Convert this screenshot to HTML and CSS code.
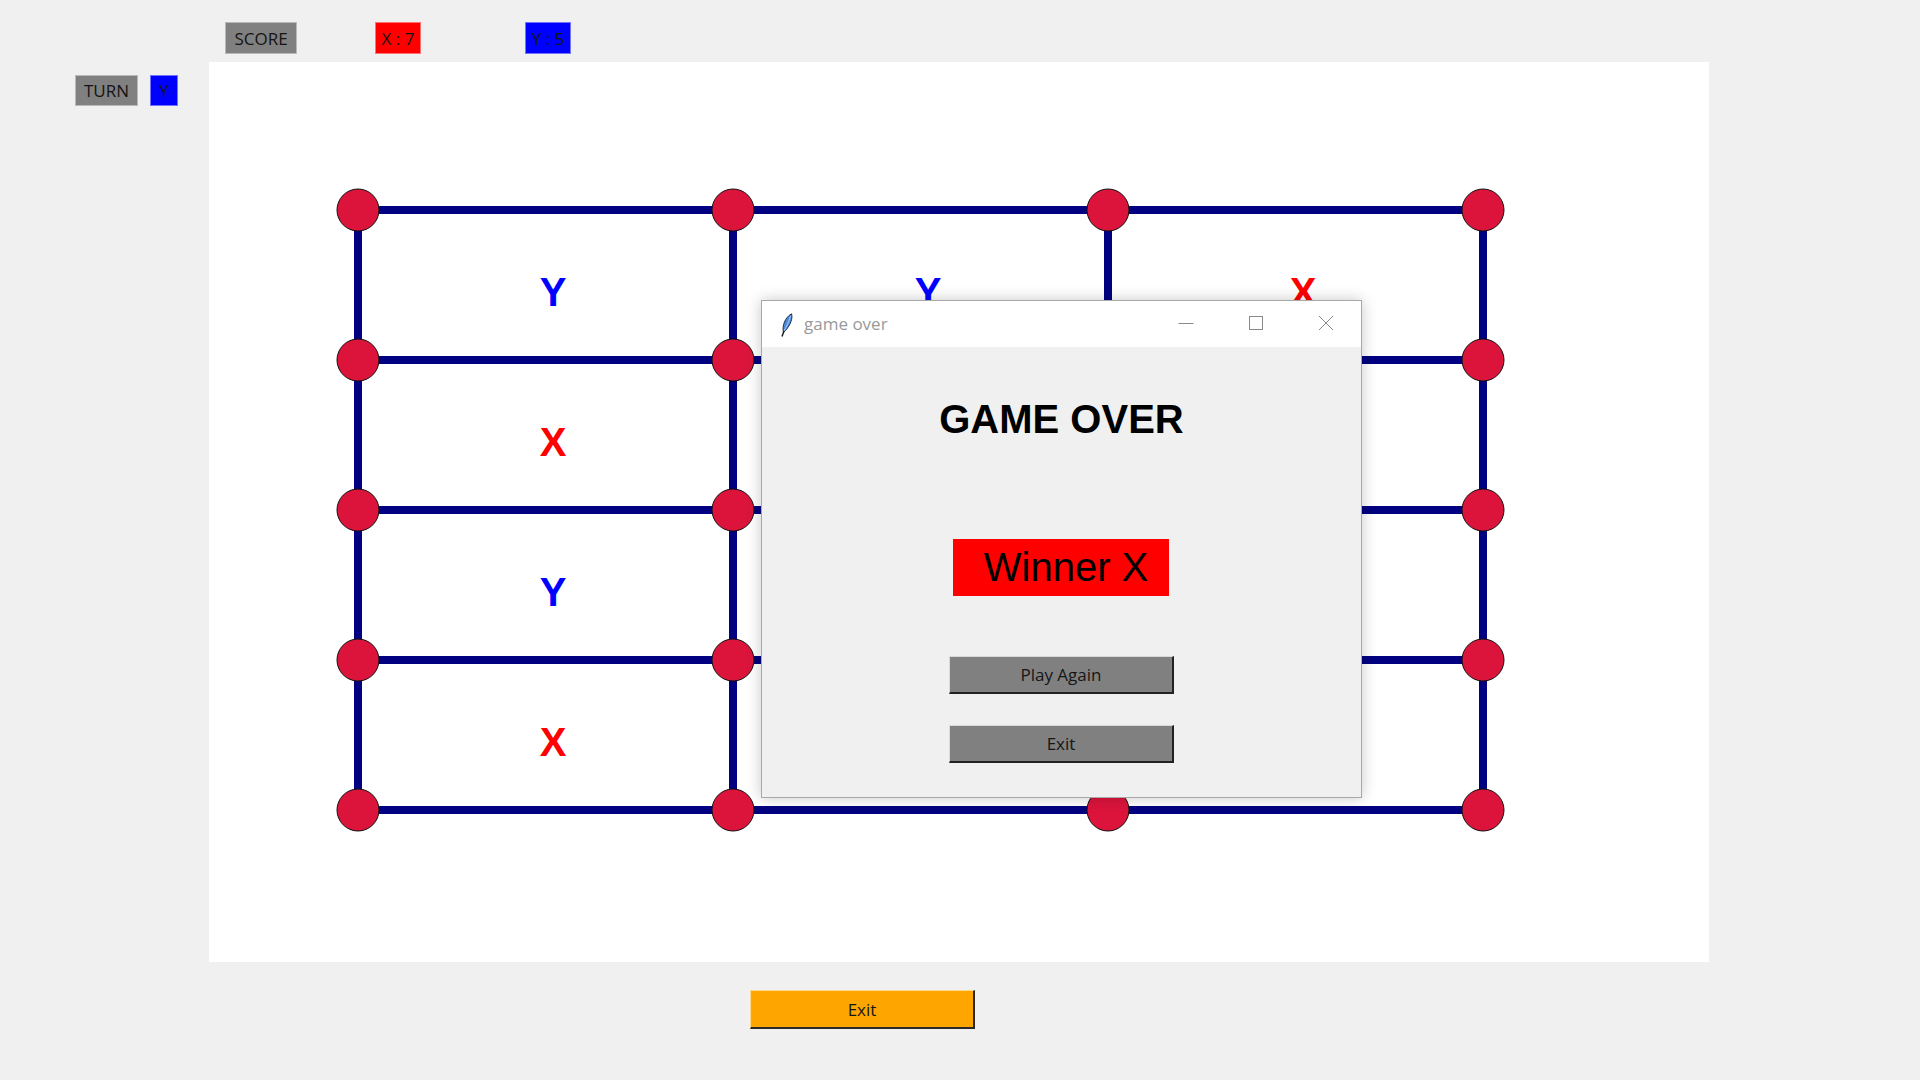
FILE: index.html
```html
<!DOCTYPE html>
<html>
<head>
<meta charset="utf-8">
<title>Dots and Boxes</title>
<link rel="stylesheet" href="styles.css">
</head>
<body>
<div class="app">
  <div class="header">
    <div class="tag tag-gray score-tag">SCORE</div>
    <div class="tag tag-red x-tag">X : 7</div>
    <div class="tag tag-blue y-tag">Y : 5</div>
  </div>
  <div class="main">
    <div class="turn">
      <div class="tag tag-gray turn-tag">TURN</div>
      <div class="tag tag-blue turn-val">Y</div>
    </div>
    <div class="board">
      <svg class="board-svg" width="1500" height="900" viewBox="0 0 1500 900" xmlns="http://www.w3.org/2000/svg">
        <g stroke="#000080" stroke-width="8" stroke-linecap="butt">
          <line x1="149" y1="148" x2="1274" y2="148"/>
          <line x1="149" y1="298" x2="1274" y2="298"/>
          <line x1="149" y1="448" x2="1274" y2="448"/>
          <line x1="149" y1="598" x2="1274" y2="598"/>
          <line x1="149" y1="748" x2="1274" y2="748"/>
          <line x1="149" y1="148" x2="149" y2="748"/>
          <line x1="524" y1="148" x2="524" y2="748"/>
          <line x1="899" y1="148" x2="899" y2="748"/>
          <line x1="1274" y1="148" x2="1274" y2="748"/>
        </g>
        <g class="marks" font-family="'Liberation Sans', Arial, sans-serif" font-weight="700" font-size="40" text-anchor="middle">
          <text x="344" y="244" fill="#0000ff">Y</text>
          <text x="344" y="394" fill="#ff0000">X</text>
          <text x="344" y="544" fill="#0000ff">Y</text>
          <text x="344" y="694" fill="#ff0000">X</text>
          <text x="719" y="244" fill="#0000ff">Y</text>
          <text x="719" y="394" fill="#ff0000">X</text>
          <text x="719" y="544" fill="#ff0000">X</text>
          <text x="719" y="694" fill="#0000ff">Y</text>
          <text x="1094" y="244" fill="#ff0000">X</text>
          <text x="1094" y="394" fill="#ff0000">X</text>
          <text x="1094" y="544" fill="#ff0000">X</text>
          <text x="1094" y="694" fill="#ff0000">X</text>
        </g>
        <g fill="#dc143c" stroke="#111" stroke-width="1">
          <circle cx="149" cy="148" r="21"/><circle cx="524" cy="148" r="21"/><circle cx="899" cy="148" r="21"/><circle cx="1274" cy="148" r="21"/>
          <circle cx="149" cy="298" r="21"/><circle cx="524" cy="298" r="21"/><circle cx="899" cy="298" r="21"/><circle cx="1274" cy="298" r="21"/>
          <circle cx="149" cy="448" r="21"/><circle cx="524" cy="448" r="21"/><circle cx="899" cy="448" r="21"/><circle cx="1274" cy="448" r="21"/>
          <circle cx="149" cy="598" r="21"/><circle cx="524" cy="598" r="21"/><circle cx="899" cy="598" r="21"/><circle cx="1274" cy="598" r="21"/>
          <circle cx="149" cy="748" r="21"/><circle cx="524" cy="748" r="21"/><circle cx="899" cy="748" r="21"/><circle cx="1274" cy="748" r="21"/>
        </g>
      </svg>
    </div>
  </div>
  <div class="footer">
    <button class="btn btn-orange">Exit</button>
  </div>
</div>

<div class="dialog">
  <div class="titlebar">
    <svg class="feather" width="14" height="24" viewBox="0 0 14 24" xmlns="http://www.w3.org/2000/svg">
      <path d="M12.5 0.8 C14 5 11.5 12 6.5 17.5 L4.5 19.5 C2.8 13 6 4.5 12.5 0.8 Z" fill="#4a8ad8" stroke="#1d2f4d" stroke-width="1"/>
      <path d="M11.5 3 C10 8.5 8 13 5 18" fill="none" stroke="#b5d4f5" stroke-width="0.9"/>
      <path d="M5 18 L3 23.5" stroke="#1b1b1b" stroke-width="1.5" fill="none"/>
    </svg>
    <span class="title-text">game over</span>
    <div class="caption">
      <div class="cap-btn">
        <svg width="16" height="16" viewBox="0 0 16 16"><line x1="0.5" y1="8.5" x2="15.5" y2="8.5" stroke="#8a8a8a" stroke-width="1"/></svg>
      </div>
      <div class="cap-btn">
        <svg width="16" height="16" viewBox="0 0 16 16"><rect x="1.5" y="1.5" width="13" height="13" fill="none" stroke="#8a8a8a" stroke-width="1"/></svg>
      </div>
      <div class="cap-btn">
        <svg width="16" height="16" viewBox="0 0 16 16"><path d="M1 1 L15 15 M15 1 L1 15" stroke="#8a8a8a" stroke-width="1" fill="none"/></svg>
      </div>
    </div>
  </div>
  <div class="dialog-body">
    <div class="go-title">GAME OVER</div>
    <div class="winner">Winner X</div>
    <button class="btn btn-gray play-btn">Play Again</button>
    <button class="btn btn-gray exit-btn">Exit</button>
  </div>
</div>
</body>
</html>
```

FILE: styles.css
```css
* { box-sizing: border-box; }

html, body {
  margin: 0;
  padding: 0;
  width: 1920px;
  height: 1080px;
  overflow: hidden;
  background: #f0f0f0;
  font-family: "Open Sans", "Noto Sans", sans-serif;
}

.app {
  display: flex;
  flex-direction: column;
}

.header {
  display: flex;
  align-items: flex-start;
  height: 62px;
  padding: 22px 0 0 225px;
}

.tag {
  height: 32px;
  display: flex;
  align-items: center;
  justify-content: center;
  font-size: 17px;
  color: #141414;
  border: 1px solid rgba(255, 255, 255, 0.45);
  white-space: nowrap;
}

.tag-gray { background: #808080; }
.tag-red { background: #ff0000; }
.tag-blue { background: #0000ff; }

.score-tag { width: 72px; }
.x-tag { width: 46px; margin-left: 78px; }
.y-tag { width: 46px; margin-left: 104px; }

.main {
  display: flex;
}

.turn {
  width: 209px;
  display: flex;
  align-items: flex-start;
  gap: 12px;
  padding: 13px 0 0 75px;
}

.turn .tag { height: 31px; }
.turn-tag { width: 63px; }
.turn-val { width: 28px; }

.board {
  width: 1500px;
  height: 900px;
  background: #ffffff;
}

.board-svg { display: block; }

.footer {
  padding: 28px 0 0 750px;
}

.btn {
  display: block;
  width: 225px;
  font-family: "Open Sans", "Noto Sans", sans-serif;
  font-size: 17px;
  color: #161616;
  padding: 0;
  margin: 0;
  border-style: solid;
  border-width: 1px 2px 2px 1px;
}

.btn-orange {
  height: 39px;
  background: #ffa500;
  border-color: #ffd98f #2a2a2a #2a2a2a #ffd98f;
}

.btn-gray {
  height: 38px;
  background: #808080;
  border-color: #d9d9d9 #222222 #222222 #d9d9d9;
}

.dialog {
  position: absolute;
  left: 761px;
  top: 300px;
  width: 601px;
  height: 498px;
  border: 1px solid #a8a8a8;
  background: #f0f0f0;
  box-shadow: 0 0 14px rgba(0, 0, 0, 0.22);
  display: flex;
  flex-direction: column;
}

.titlebar {
  height: 46px;
  background: #ffffff;
  display: flex;
  align-items: center;
  padding-left: 17px;
}

.feather { display: block; margin-top: 1px; }

.title-text {
  margin-left: 11px;
  font-size: 17px;
  color: #999999;
  padding-bottom: 2px;
}

.caption {
  margin-left: auto;
  display: flex;
  height: 100%;
}

.cap-btn {
  width: 70px;
  height: 100%;
  display: flex;
  align-items: center;
  justify-content: center;
}

.cap-btn svg { display: block; margin-bottom: 2px; }

.dialog-body {
  flex: 1;
  display: flex;
  flex-direction: column;
  align-items: center;
  padding-top: 49px;
}

.go-title {
  font-family: "Liberation Sans", Arial, sans-serif;
  font-weight: 700;
  font-size: 40px;
  line-height: 46px;
  color: #000;
}

.winner {
  margin-top: 97px;
  height: 57px;
  line-height: 57px;
  padding: 0 21px 0 31px;
  background: #ff0000;
  font-family: "Liberation Sans", Arial, sans-serif;
  font-size: 40px;
  color: #000;
  margin-left: -1px;
}

.play-btn { margin-top: 60px; }
.exit-btn { margin-top: 31px; }
```
